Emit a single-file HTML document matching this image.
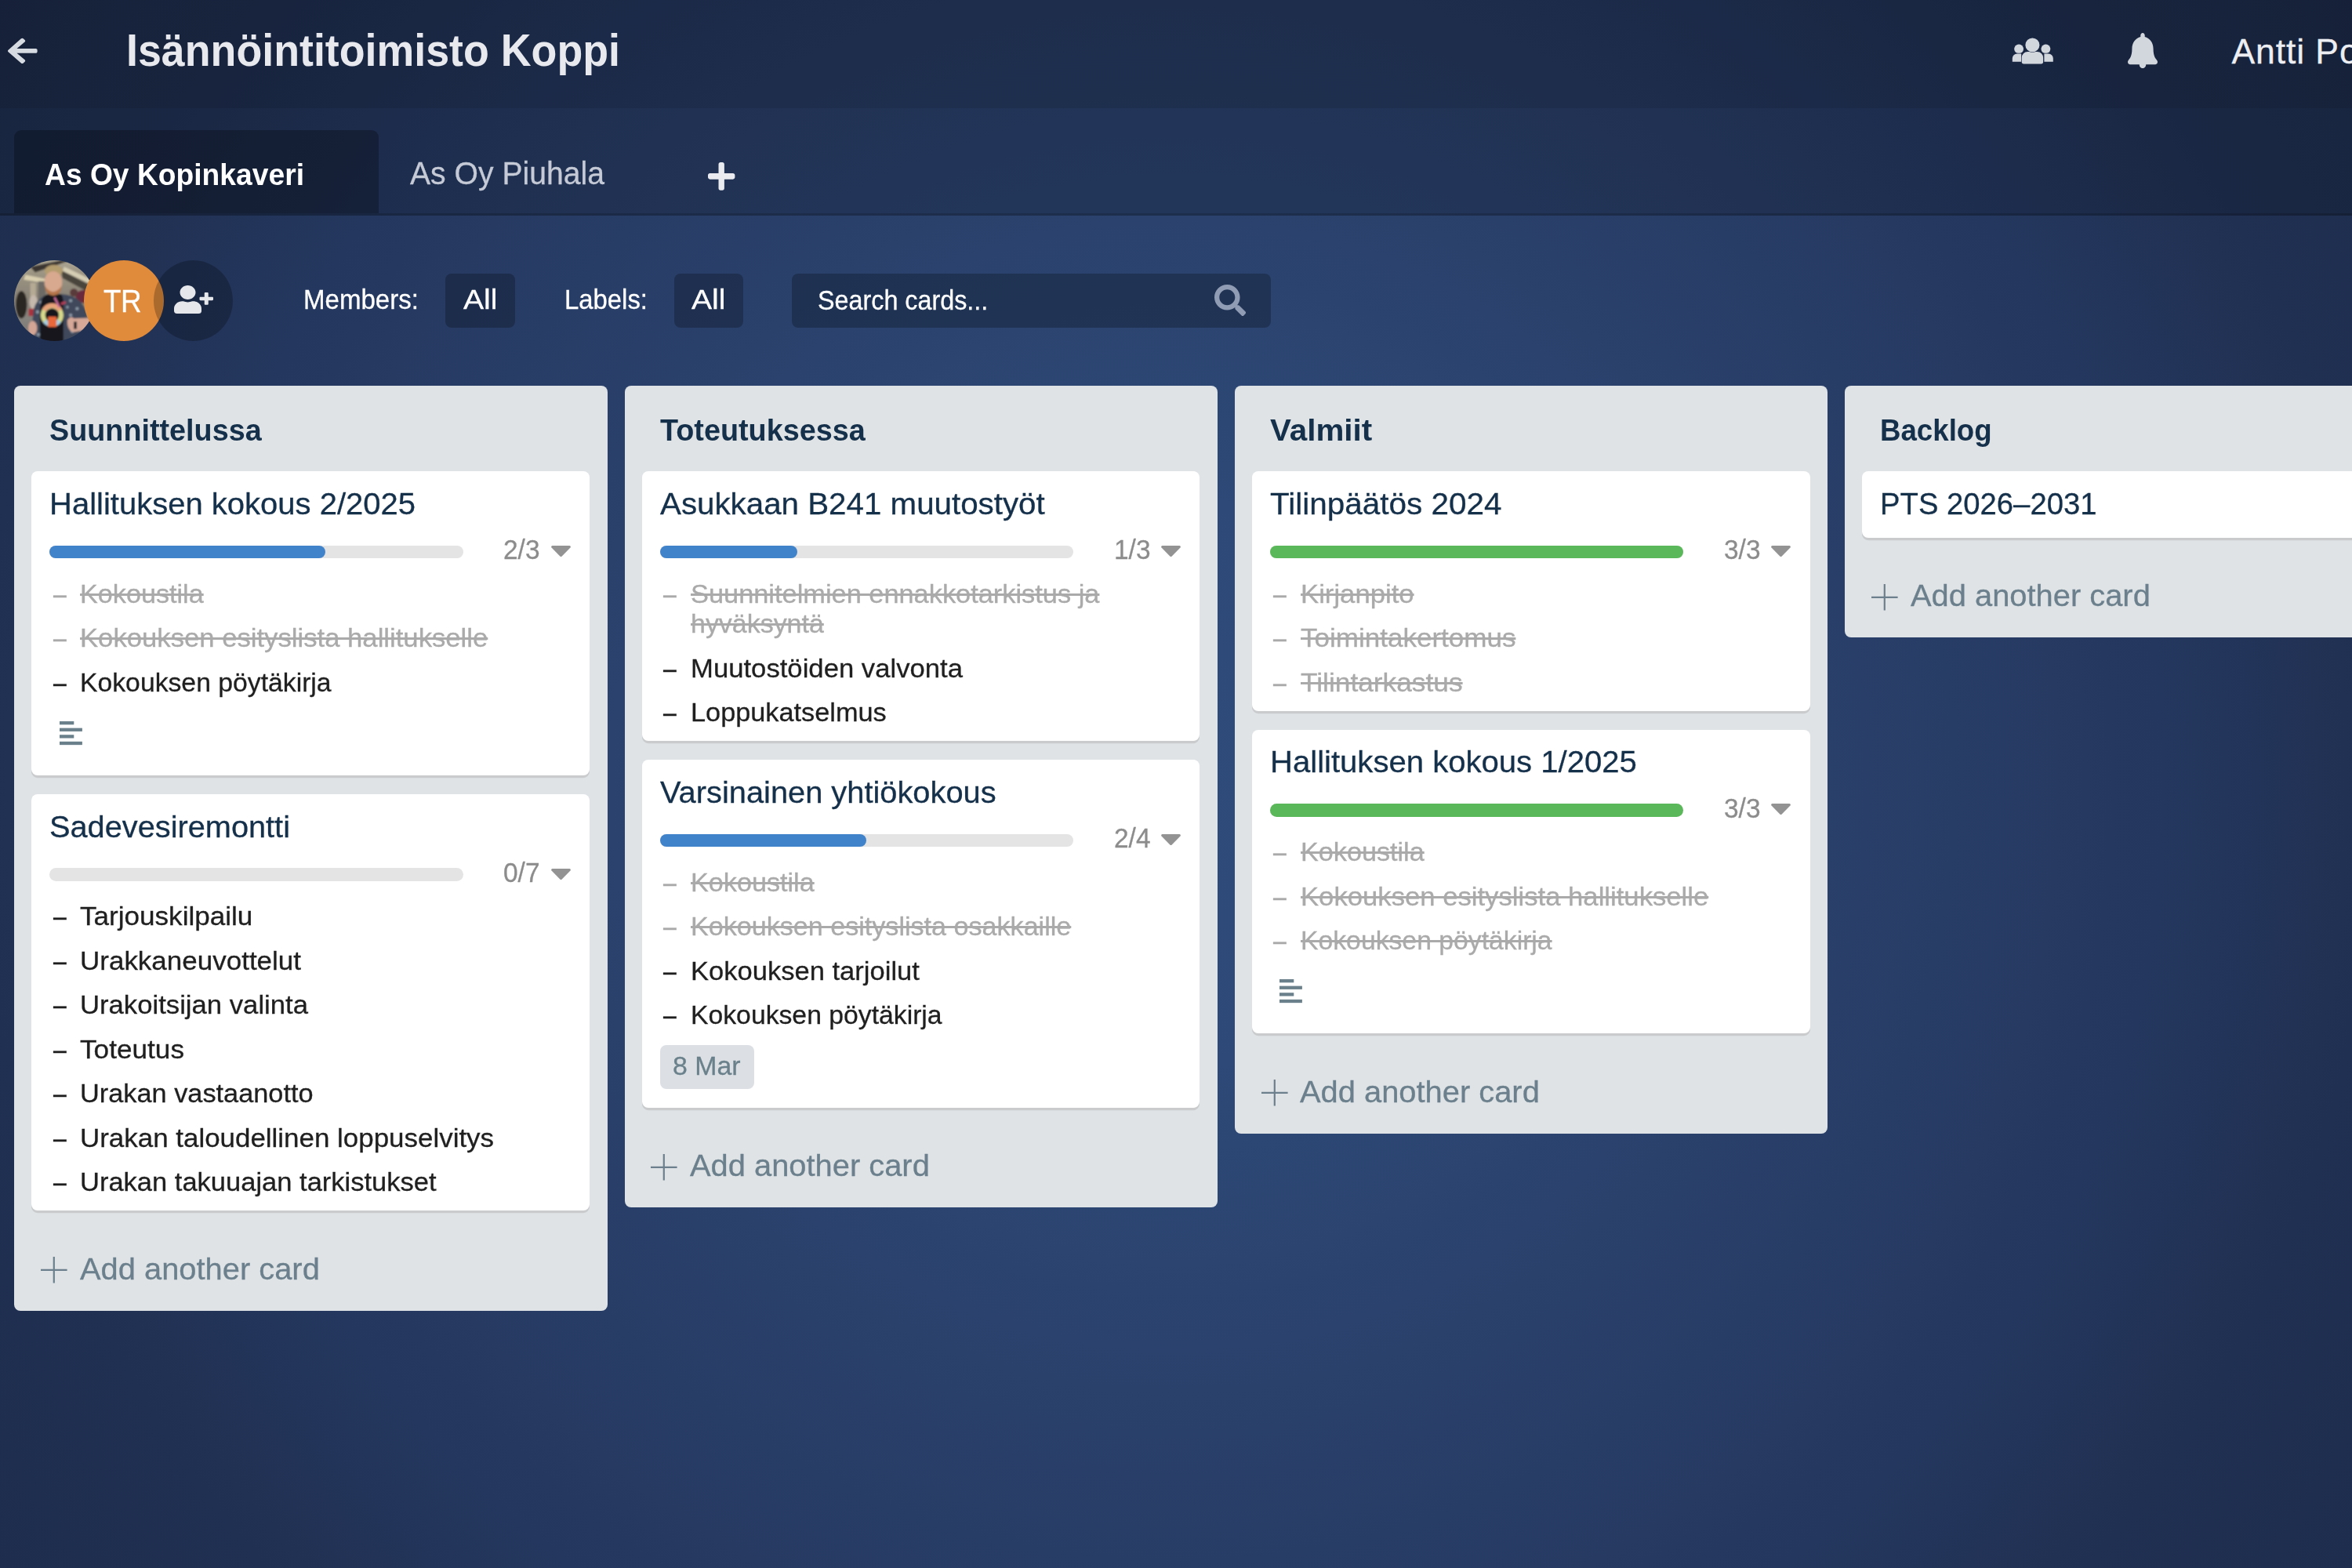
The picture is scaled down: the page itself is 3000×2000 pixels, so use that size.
<!DOCTYPE html>
<html lang="fi"><head><meta charset="utf-8"><title>Isännöintitoimisto Koppi</title>
<style>
*{margin:0;padding:0;box-sizing:border-box}
html,body{width:3000px;height:2000px;overflow:hidden}
body{position:relative;font-family:"Liberation Sans",sans-serif;
 background:radial-gradient(circle farthest-corner at 50% 50%,#2f4b7a 0%,#2e4977 20%,#2a426d 40%,#283d66 55%,#24375e 70%,#203052 85%,#1e2d4d 100%);}
.t{position:absolute;white-space:nowrap;line-height:1;display:block;transform-origin:0 0;-webkit-text-stroke:0.3px currentColor;text-decoration-thickness:2.1px}
.nb{-webkit-text-stroke:0}
.b{position:absolute}
.ic{position:absolute;display:block;overflow:visible}
</style></head>
<body>
<header><div class="b" style="left:0.0px;top:0.0px;width:3000.0px;height:138.0px;background:rgba(0,0,0,.25)"></div><svg class="ic" style="left:9.6px;top:45.7px;width:37.6px;height:37.8px" viewBox="0 0 448 512" preserveAspectRatio="none" ><path fill="#d6dae1" d="M257.5 445.1l-22.2 22.2c-9.4 9.4-24.6 9.4-33.9 0L7 273c-9.4-9.4-9.4-24.6 0-33.9L201.4 44.7c9.4-9.4 24.6-9.4 33.9 0l22.2 22.2c9.5 9.5 9.3 25-.4 34.3L136.6 216H424c13.3 0 24 10.7 24 24v32c0 13.3-10.7 24-24 24H136.6l120.5 114.8c9.8 9.3 10 24.8.4 34.3z"/></svg><h1 class="t nb" style="left:161.0px;top:37.2px;font-size:56.5px;font-weight:700;color:#e7e9ef;transform:scaleX(0.9513);">Isännöintitoimisto Koppi</h1><svg class="ic" style="left:2566px;top:48px;width:54px;height:35px" viewBox="0 0 54 35"><g fill="#d2d6dd" stroke="#1b2845" stroke-width="1.4" paint-order="stroke"><circle cx="9.1" cy="14.3" r="5.9"/><circle cx="43.4" cy="14.3" r="5.9"/><path d="M.8 30.8V26.4a6 6 0 0 1 6-6h5.4v10.4z"/><path d="M52.8 30.8V26.4a6 6 0 0 0-6-6h-5.4v10.4z"/><path d="M15.3 33.4a2.6 2.6 0 0 1-2.6-2.6v-5.3a7.6 7.6 0 0 1 7.6-7.6h12.2a7.6 7.6 0 0 1 7.6 7.6v5.3a2.6 2.6 0 0 1-2.6 2.6z"/><circle cx="26.4" cy="9.4" r="9"/></g></svg><svg class="ic" style="left:2713.6px;top:42.2px;width:38.0px;height:45.0px" viewBox="0 0 448 466" preserveAspectRatio="none" ><path fill="#d2d6dd" d="M224 466c27.6 0 50-22.4 50-50H174c0 27.6 22.4 50 50 50zM439.39 362.29c-19.32-20.76-55.47-51.99-55.47-154.29 0-77.7-54.48-139.9-127.94-155.16V32c0-17.67-14.32-32-31.98-32s-31.98 14.33-31.98 32v20.84C118.56 68.1 64.08 130.3 64.08 208c0 102.3-36.15 133.53-55.47 154.29-6 6.45-8.66 14.16-8.61 21.71.11 16.4 12.98 32 32.1 32h383.8c19.12 0 32-15.6 32.1-32 .05-7.55-2.61-15.27-8.61-21.71z"/></svg><span class="t " style="left:2846.5px;top:43.7px;font-size:44.5px;font-weight:400;color:#eceef2;letter-spacing:0.9px;">Antti Po</span></header>
<nav><div class="b" style="left:0.0px;top:138.0px;width:3000.0px;height:134.0px;background:rgba(0,0,0,.17)"></div><div class="b" style="left:0.0px;top:272.0px;width:3000.0px;height:2.6px;background:rgba(0,0,0,.30)"></div><div class="b" style="left:18.3px;top:165.6px;width:465.2px;height:106.6px;background:rgba(0,0,0,.26);border-radius:9px 9px 0 0"></div><span class="t nb" style="left:57.0px;top:202.5px;font-size:39px;font-weight:700;color:#fff;transform:scaleX(0.9544);">As Oy Kopinkaveri</span><span class="t " style="left:522.9px;top:201.4px;font-size:40.5px;font-weight:400;color:#c5cad6;transform:scaleX(0.9663);">As Oy Piuhala</span><svg class="ic" style="left:903.0px;top:207.1px;width:34.4px;height:35.7px" viewBox="0 32 448 448" preserveAspectRatio="none" ><path fill="#e9ebf0" d="M416 208H272V64c0-17.67-14.33-32-32-32h-32c-17.67 0-32 14.33-32 32v144H32c-17.67 0-32 14.33-32 32v32c0 17.67 14.33 32 32 32h144v144c0 17.67 14.33 32 32 32h32c17.67 0 32-14.33 32-32V304h144c17.67 0 32-14.33 32-32v-32c0-17.67-14.33-32-32-32z"/></svg></nav>
<section class="toolbar"><svg class="ic" style="left:18px;top:331.5px;width:103px;height:103px" viewBox="0 0 100 100"><defs><clipPath id="avc"><circle cx="50" cy="50" r="50"/></clipPath><filter id="avb" x="-10%" y="-10%" width="120%" height="120%"><feGaussianBlur stdDeviation="1.1"/></filter><linearGradient id="avbg" x1="0" y1="0" x2="0" y2="1"><stop offset="0" stop-color="#b3ac9a"/><stop offset=".2" stop-color="#9c9482"/><stop offset=".45" stop-color="#8a8478"/><stop offset=".7" stop-color="#86827d"/><stop offset="1" stop-color="#76726c"/></linearGradient></defs><g clip-path="url(#avc)"><g filter="url(#avb)"><rect x="-5" y="-5" width="110" height="110" fill="url(#avbg)"/><path d="M20 8 58 0 70 0 26 15z" fill="#3b3630"/><path d="M14 18 44 24 44 29 12 24z" fill="#d9cfb0"/><path d="M58 12 100 34V44L60 22z" fill="#4a443c"/><path d="M62 8 100 26v6L60 13z" fill="#d6ceb4"/><rect x="30" y="26" width="9" height="30" fill="#6d6a66"/><rect x="20" y="28" width="7" height="24" fill="#b5aa94"/><ellipse cx="9" cy="55" rx="7" ry="17" fill="#2b2521"/><ellipse cx="24" cy="52" rx="5" ry="9" fill="#c5b8ac"/><rect x="18" y="60" width="9" height="9" fill="#a8323c"/><ellipse cx="86" cy="45" rx="10" ry="8" fill="#6b2a3e"/><ellipse cx="74" cy="40" rx="5" ry="5" fill="#5a3a3a"/><path d="M20 104 24 62Q28 44 46 42H60Q84 44 90 66L96 104z" fill="#3f4a5c"/><g fill="#8e9aa8"><circle cx="33" cy="52" r="2"/><circle cx="29" cy="64" r="2"/><circle cx="36" cy="74" r="1.8"/><circle cx="70" cy="50" r="2"/><circle cx="78" cy="60" r="2"/><circle cx="70" cy="68" r="2"/><circle cx="82" cy="74" r="2"/><circle cx="72" cy="88" r="2"/><circle cx="66" cy="58" r="1.6"/><circle cx="30" cy="92" r="2"/><circle cx="84" cy="90" r="1.8"/></g><path d="M32 104V60Q33 44 42 42H58Q62 46 61 60V104z" fill="#17181c"/><ellipse cx="49" cy="13" rx="11" ry="7.5" fill="#b39c6e"/><ellipse cx="48.5" cy="27" rx="11" ry="13.5" fill="#d8a98f"/><path d="M38 32Q48 46 59 32Q58 43 48.500 44Q39 43 38 32z" fill="#b5744a"/><circle cx="47" cy="68" r="11.3" fill="none" stroke="#d6d98c" stroke-width="5.6"/><path d="M37 62A11.300 11.300 0 0 1 57 62" fill="none" stroke="#e8a27a" stroke-width="5.6"/><path d="M38 75A11.300 11.300 0 0 0 56 75" fill="none" stroke="#a6cde0" stroke-width="5.6"/><path d="M50 46 56 58" stroke="#c86a9a" stroke-width="2.5"/><path d="M58 54 64 52" stroke="#b8405a" stroke-width="3"/><rect x="42" y="70" width="10.5" height="12.5" rx="1" fill="#e9683a"/><ellipse cx="23" cy="84" rx="5.5" ry="9" fill="#d3a595"/><path d="M66 74Q70 68 74 72L96 71V85L73 89Q65 86 66 74z" fill="#d6a898"/><rect x="74" y="76" width="3.6" height="9" fill="#1c1c20"/></g></g></svg><div class="b" style="left:107.0px;top:331.5px;width:102.0px;height:103.0px;background:#e08a3c;border-radius:50%"></div><span class="t " style="left:132.0px;top:364.3px;font-size:41px;font-weight:400;color:#fff;transform:scaleX(.9);letter-spacing:-0.6px;">TR</span><div class="b" style="left:196.0px;top:331.5px;width:101.0px;height:103.0px;background:rgba(0,0,0,.24);border-radius:50%"></div><svg class="ic" style="left:222.0px;top:364.0px;width:50.0px;height:36.0px" viewBox="0 0 640 512" preserveAspectRatio="none" ><path fill="#e5e7eb" d="M624 208h-64v-64c0-8.8-7.2-16-16-16h-32c-8.8 0-16 7.2-16 16v64h-64c-8.8 0-16 7.2-16 16v32c0 8.8 7.2 16 16 16h64v64c0 8.8 7.2 16 16 16h32c8.8 0 16-7.2 16-16v-64h64c8.8 0 16-7.2 16-16v-32c0-8.8-7.2-16-16-16zm-400 48c70.7 0 128-57.3 128-128S294.7 0 224 0 96 57.3 96 128s57.3 128 128 128zm89.6 32h-16.7c-22.2 10.2-46.9 16-72.9 16s-50.6-5.8-72.9-16h-16.7C60.2 288 0 348.2 0 422.4V464c0 26.5 21.5 48 48 48h352c26.5 0 48-21.5 48-48v-41.6c0-74.2-60.2-134.4-134.4-134.4z"/></svg><span class="t " style="left:386.8px;top:364.7px;font-size:34.6px;font-weight:400;color:#fff;transform:scaleX(0.9563);">Members:</span><div class="b" style="left:568.4px;top:349.1px;width:88.4px;height:68.9px;background:rgba(0,0,0,.24);border-radius:8px"></div><span class="t " style="left:590.5px;top:364.7px;font-size:34.6px;font-weight:400;color:#fff;transform:scaleX(1.1317);">All</span><span class="t " style="left:719.5px;top:364.7px;font-size:34.6px;font-weight:400;color:#fff;transform:scaleX(0.9505);">Labels:</span><div class="b" style="left:860.0px;top:349.1px;width:88.4px;height:68.9px;background:rgba(0,0,0,.24);border-radius:8px"></div><span class="t " style="left:882.0px;top:364.7px;font-size:34.6px;font-weight:400;color:#fff;transform:scaleX(1.1317);">All</span><div class="b" style="left:1009.8px;top:349.1px;width:611.0px;height:68.9px;background:rgba(0,0,0,.24);border-radius:8px"></div><span class="t " style="left:1042.5px;top:365.7px;font-size:34.6px;font-weight:400;color:#fff;transform:scaleX(0.9344);">Search cards...</span><svg class="ic" style="left:1548.5px;top:363.0px;width:40.1px;height:40.0px" viewBox="0 0 512 512" preserveAspectRatio="none" ><path fill="#8f9cb4" d="M505 442.7L405.3 343c-4.5-4.5-10.6-7-17-7H372c27.6-35.3 44-79.7 44-128C416 93.1 322.9 0 208 0S0 93.1 0 208s93.1 208 208 208c48.3 0 92.7-16.4 128-44v16.3c0 6.4 2.5 12.5 7 17l99.7 99.7c9.4 9.4 24.6 9.4 33.9 0l28.3-28.3c9.4-9.4 9.4-24.6.1-34zM208 336c-70.7 0-128-57.2-128-128 0-70.7 57.2-128 128-128 70.7 0 128 57.2 128 128 0 70.7-57.2 128-128 128z"/></svg></section>
<section class="list"><div class="b" style="left:18.3px;top:491.8px;width:756.5px;height:1179.9px;background:#dfe3e6;border-radius:8px"></div><h2 class="t nb" style="left:63.3px;top:529.6px;font-size:38.6px;font-weight:700;color:#15304a;transform:scaleX(0.9790);">Suunnittelussa</h2><article><div class="b card" style="left:40.4px;top:601.4px;width:711.8px;height:387.9px;background:#fff;border-radius:8px;box-shadow:0 3.2px 0 #c9cbcd"></div><h3 class="t " style="left:63.4px;top:623.0px;font-size:39.4px;font-weight:400;color:#15304a;transform:scaleX(1.0156);">Hallituksen kokous 2/2025</h3><div class="b" style="left:63.4px;top:695.8px;width:527.6px;height:16.6px;background:#e4e4e4;border-radius:9px"></div><div class="b" style="left:63.4px;top:695.8px;width:351.7px;height:16.6px;background:#4183cb;border-radius:9px"></div><span class="t " style="left:642.3px;top:684.4px;font-size:35.4px;font-weight:400;color:#8c8c8c;transform:scaleX(0.9451);">2/3</span><svg class="ic" style="left:702.6px;top:696.0px;width:25px;height:14px" viewBox="0 0 25 14"><path fill="#939393" d="M1.6 0h21.8c1.3 0 2 1.5 1.1 2.5L13.7 13.4c-.7.7-1.7.7-2.4 0L.5 2.5C-.4 1.5.3 0 1.6 0z"/></svg><span class="t " style="left:67.7px;top:740.8px;font-size:33.3px;font-weight:400;color:#aaaaaa;transform:scaleX(0.9066);">–</span><span class="t " style="left:102.4px;top:740.8px;font-size:33.3px;font-weight:400;color:#aaaaaa;transform:scaleX(1.0265);text-decoration:line-through;">Kokoustila</span><span class="t " style="left:67.7px;top:797.3px;font-size:33.3px;font-weight:400;color:#aaaaaa;transform:scaleX(0.9066);">–</span><span class="t " style="left:102.4px;top:797.3px;font-size:33.3px;font-weight:400;color:#aaaaaa;transform:scaleX(1.0412);text-decoration:line-through;">Kokouksen esityslista hallitukselle</span><span class="t " style="left:67.7px;top:853.8px;font-size:33.3px;font-weight:400;color:#1f1f1f;transform:scaleX(0.9066);">–</span><span class="t " style="left:102.4px;top:853.8px;font-size:33.3px;font-weight:400;color:#1f1f1f;transform:scaleX(1.0130);">Kokouksen pöytäkirja</span><svg class="ic" style="left:75.6px;top:920.2px;width:29px;height:30.2px" viewBox="0 0 29 30.2"><rect x="0" y="0.00" width="18.3" height="4.3" fill="#6a808b"/><rect x="0" y="8.62" width="28.9" height="4.3" fill="#6a808b"/><rect x="0" y="17.24" width="18.3" height="4.3" fill="#6a808b"/><rect x="0" y="25.86" width="28.9" height="4.3" fill="#6a808b"/></svg></article><article><div class="b card" style="left:40.4px;top:1012.9px;width:711.8px;height:531.6px;background:#fff;border-radius:8px;box-shadow:0 3.2px 0 #c9cbcd"></div><h3 class="t " style="left:63.4px;top:1034.5px;font-size:39.4px;font-weight:400;color:#15304a;transform:scaleX(1.0087);">Sadevesiremontti</h3><div class="b" style="left:63.4px;top:1107.3px;width:527.6px;height:16.6px;background:#e4e4e4;border-radius:9px"></div><span class="t " style="left:642.3px;top:1095.9px;font-size:35.4px;font-weight:400;color:#8c8c8c;transform:scaleX(0.9451);">0/7</span><svg class="ic" style="left:702.6px;top:1107.5px;width:25px;height:14px" viewBox="0 0 25 14"><path fill="#939393" d="M1.6 0h21.8c1.3 0 2 1.5 1.1 2.5L13.7 13.4c-.7.7-1.7.7-2.4 0L.5 2.5C-.4 1.5.3 0 1.6 0z"/></svg><span class="t " style="left:67.7px;top:1152.3px;font-size:33.3px;font-weight:400;color:#1f1f1f;transform:scaleX(0.9066);">–</span><span class="t " style="left:102.4px;top:1152.3px;font-size:33.3px;font-weight:400;color:#1f1f1f;transform:scaleX(1.0538);">Tarjouskilpailu</span><span class="t " style="left:67.7px;top:1208.8px;font-size:33.3px;font-weight:400;color:#1f1f1f;transform:scaleX(0.9066);">–</span><span class="t " style="left:102.4px;top:1208.8px;font-size:33.3px;font-weight:400;color:#1f1f1f;transform:scaleX(1.0508);">Urakkaneuvottelut</span><span class="t " style="left:67.7px;top:1265.3px;font-size:33.3px;font-weight:400;color:#1f1f1f;transform:scaleX(0.9066);">–</span><span class="t " style="left:102.4px;top:1265.3px;font-size:33.3px;font-weight:400;color:#1f1f1f;transform:scaleX(1.0413);">Urakoitsijan valinta</span><span class="t " style="left:67.7px;top:1321.8px;font-size:33.3px;font-weight:400;color:#1f1f1f;transform:scaleX(0.9066);">–</span><span class="t " style="left:102.4px;top:1321.8px;font-size:33.3px;font-weight:400;color:#1f1f1f;transform:scaleX(1.0566);">Toteutus</span><span class="t " style="left:67.7px;top:1378.3px;font-size:33.3px;font-weight:400;color:#1f1f1f;transform:scaleX(0.9066);">–</span><span class="t " style="left:102.4px;top:1378.3px;font-size:33.3px;font-weight:400;color:#1f1f1f;transform:scaleX(1.0306);">Urakan vastaanotto</span><span class="t " style="left:67.7px;top:1434.8px;font-size:33.3px;font-weight:400;color:#1f1f1f;transform:scaleX(0.9066);">–</span><span class="t " style="left:102.4px;top:1434.8px;font-size:33.3px;font-weight:400;color:#1f1f1f;transform:scaleX(1.0488);">Urakan taloudellinen loppuselvitys</span><span class="t " style="left:67.7px;top:1491.3px;font-size:33.3px;font-weight:400;color:#1f1f1f;transform:scaleX(0.9066);">–</span><span class="t " style="left:102.4px;top:1491.3px;font-size:33.3px;font-weight:400;color:#1f1f1f;transform:scaleX(1.0364);">Urakan takuuajan tarkistukset</span></article><svg class="ic" style="left:52.1px;top:1603.0px;width:33.6px;height:33.6px" viewBox="0 0 33.6 33.6"><path d="M16.8 0v33.6M0 16.8h33.6" stroke="#6b808c" stroke-width="2.2" fill="none"/></svg><span class="t " style="left:102.0px;top:1598.6px;font-size:39.4px;font-weight:400;color:#6b808c;transform:scaleX(1.0119);">Add another card</span></section>
<section class="list"><div class="b" style="left:796.5px;top:491.8px;width:756.5px;height:1048.4px;background:#dfe3e6;border-radius:8px"></div><h2 class="t nb" style="left:841.5px;top:529.6px;font-size:38.6px;font-weight:700;color:#15304a;transform:scaleX(0.9791);">Toteutuksessa</h2><article><div class="b card" style="left:818.6px;top:601.4px;width:711.8px;height:344.1px;background:#fff;border-radius:8px;box-shadow:0 3.2px 0 #c9cbcd"></div><h3 class="t " style="left:841.6px;top:623.0px;font-size:39.4px;font-weight:400;color:#15304a;transform:scaleX(1.0233);">Asukkaan B241 muutostyöt</h3><div class="b" style="left:841.6px;top:695.8px;width:527.6px;height:16.6px;background:#e4e4e4;border-radius:9px"></div><div class="b" style="left:841.6px;top:695.8px;width:175.9px;height:16.6px;background:#4183cb;border-radius:9px"></div><span class="t " style="left:1420.5px;top:684.4px;font-size:35.4px;font-weight:400;color:#8c8c8c;transform:scaleX(0.9451);">1/3</span><svg class="ic" style="left:1480.8px;top:696.0px;width:25px;height:14px" viewBox="0 0 25 14"><path fill="#939393" d="M1.6 0h21.8c1.3 0 2 1.5 1.1 2.5L13.7 13.4c-.7.7-1.7.7-2.4 0L.5 2.5C-.4 1.5.3 0 1.6 0z"/></svg><span class="t " style="left:845.9px;top:740.8px;font-size:33.3px;font-weight:400;color:#aaaaaa;transform:scaleX(0.9066);">–</span><span class="t " style="left:880.6px;top:740.8px;font-size:33.3px;font-weight:400;color:#aaaaaa;transform:scaleX(1.0319);text-decoration:line-through;">Suunnitelmien ennakkotarkistus ja</span><span class="t " style="left:880.6px;top:779.3px;font-size:33.3px;font-weight:400;color:#aaaaaa;transform:scaleX(1.0193);text-decoration:line-through;">hyväksyntä</span><span class="t " style="left:845.9px;top:835.8px;font-size:33.3px;font-weight:400;color:#1f1f1f;transform:scaleX(0.9066);">–</span><span class="t " style="left:880.6px;top:835.8px;font-size:33.3px;font-weight:400;color:#1f1f1f;transform:scaleX(1.0415);">Muutostöiden valvonta</span><span class="t " style="left:845.9px;top:892.3px;font-size:33.3px;font-weight:400;color:#1f1f1f;transform:scaleX(0.9066);">–</span><span class="t " style="left:880.6px;top:892.3px;font-size:33.3px;font-weight:400;color:#1f1f1f;transform:scaleX(1.0298);">Loppukatselmus</span></article><article><div class="b card" style="left:818.6px;top:969.1px;width:711.8px;height:443.9px;background:#fff;border-radius:8px;box-shadow:0 3.2px 0 #c9cbcd"></div><h3 class="t " style="left:841.6px;top:990.7px;font-size:39.4px;font-weight:400;color:#15304a;transform:scaleX(1.0107);">Varsinainen yhtiökokous</h3><div class="b" style="left:841.6px;top:1063.5px;width:527.6px;height:16.6px;background:#e4e4e4;border-radius:9px"></div><div class="b" style="left:841.6px;top:1063.5px;width:263.8px;height:16.6px;background:#4183cb;border-radius:9px"></div><span class="t " style="left:1420.5px;top:1052.1px;font-size:35.4px;font-weight:400;color:#8c8c8c;transform:scaleX(0.9451);">2/4</span><svg class="ic" style="left:1480.8px;top:1063.7px;width:25px;height:14px" viewBox="0 0 25 14"><path fill="#939393" d="M1.6 0h21.8c1.3 0 2 1.5 1.1 2.5L13.7 13.4c-.7.7-1.7.7-2.4 0L.5 2.5C-.4 1.5.3 0 1.6 0z"/></svg><span class="t " style="left:845.9px;top:1108.5px;font-size:33.3px;font-weight:400;color:#aaaaaa;transform:scaleX(0.9066);">–</span><span class="t " style="left:880.6px;top:1108.5px;font-size:33.3px;font-weight:400;color:#aaaaaa;transform:scaleX(1.0265);text-decoration:line-through;">Kokoustila</span><span class="t " style="left:845.9px;top:1165.0px;font-size:33.3px;font-weight:400;color:#aaaaaa;transform:scaleX(0.9066);">–</span><span class="t " style="left:880.6px;top:1165.0px;font-size:33.3px;font-weight:400;color:#aaaaaa;transform:scaleX(1.0243);text-decoration:line-through;">Kokouksen esityslista osakkaille</span><span class="t " style="left:845.9px;top:1221.5px;font-size:33.3px;font-weight:400;color:#1f1f1f;transform:scaleX(0.9066);">–</span><span class="t " style="left:880.6px;top:1221.5px;font-size:33.3px;font-weight:400;color:#1f1f1f;transform:scaleX(1.0375);">Kokouksen tarjoilut</span><span class="t " style="left:845.9px;top:1278.0px;font-size:33.3px;font-weight:400;color:#1f1f1f;transform:scaleX(0.9066);">–</span><span class="t " style="left:880.6px;top:1278.0px;font-size:33.3px;font-weight:400;color:#1f1f1f;transform:scaleX(1.0130);">Kokouksen pöytäkirja</span><div class="b" style="left:841.6px;top:1332.7px;width:120.4px;height:56.6px;background:#dce0e4;border-radius:8px"></div><span class="t " style="left:858.0px;top:1342.9px;font-size:33.3px;font-weight:400;color:#6a808b;transform:scaleX(1.0162);">8 Mar</span></article><svg class="ic" style="left:830.3px;top:1471.5px;width:33.6px;height:33.6px" viewBox="0 0 33.6 33.6"><path d="M16.8 0v33.6M0 16.8h33.6" stroke="#6b808c" stroke-width="2.2" fill="none"/></svg><span class="t " style="left:880.2px;top:1467.1px;font-size:39.4px;font-weight:400;color:#6b808c;transform:scaleX(1.0119);">Add another card</span></section>
<section class="list"><div class="b" style="left:1574.7px;top:491.8px;width:756.5px;height:953.9px;background:#dfe3e6;border-radius:8px"></div><h2 class="t nb" style="left:1619.7px;top:529.6px;font-size:38.6px;font-weight:700;color:#15304a;transform:scaleX(1.0468);">Valmiit</h2><article><div class="b card" style="left:1596.8px;top:601.4px;width:711.8px;height:305.6px;background:#fff;border-radius:8px;box-shadow:0 3.2px 0 #c9cbcd"></div><h3 class="t " style="left:1619.8px;top:623.0px;font-size:39.4px;font-weight:400;color:#15304a;transform:scaleX(1.0274);">Tilinpäätös 2024</h3><div class="b" style="left:1619.8px;top:695.8px;width:527.6px;height:16.6px;background:#e4e4e4;border-radius:9px"></div><div class="b" style="left:1619.8px;top:695.8px;width:527.6px;height:16.6px;background:#5bb85a;border-radius:9px"></div><span class="t " style="left:2198.7px;top:684.4px;font-size:35.4px;font-weight:400;color:#8c8c8c;transform:scaleX(0.9451);">3/3</span><svg class="ic" style="left:2259.0px;top:696.0px;width:25px;height:14px" viewBox="0 0 25 14"><path fill="#939393" d="M1.6 0h21.8c1.3 0 2 1.5 1.1 2.5L13.7 13.4c-.7.7-1.7.7-2.4 0L.5 2.5C-.4 1.5.3 0 1.6 0z"/></svg><span class="t " style="left:1624.1px;top:740.8px;font-size:33.3px;font-weight:400;color:#aaaaaa;transform:scaleX(0.9066);">–</span><span class="t " style="left:1658.8px;top:740.8px;font-size:33.3px;font-weight:400;color:#aaaaaa;transform:scaleX(1.0416);text-decoration:line-through;">Kirjanpito</span><span class="t " style="left:1624.1px;top:797.3px;font-size:33.3px;font-weight:400;color:#aaaaaa;transform:scaleX(0.9066);">–</span><span class="t " style="left:1658.8px;top:797.3px;font-size:33.3px;font-weight:400;color:#aaaaaa;transform:scaleX(1.0517);text-decoration:line-through;">Toimintakertomus</span><span class="t " style="left:1624.1px;top:853.8px;font-size:33.3px;font-weight:400;color:#aaaaaa;transform:scaleX(0.9066);">–</span><span class="t " style="left:1658.8px;top:853.8px;font-size:33.3px;font-weight:400;color:#aaaaaa;transform:scaleX(1.0600);text-decoration:line-through;">Tilintarkastus</span></article><article><div class="b card" style="left:1596.8px;top:930.6px;width:711.8px;height:387.9px;background:#fff;border-radius:8px;box-shadow:0 3.2px 0 #c9cbcd"></div><h3 class="t " style="left:1619.8px;top:952.2px;font-size:39.4px;font-weight:400;color:#15304a;transform:scaleX(1.0173);">Hallituksen kokous 1/2025</h3><div class="b" style="left:1619.8px;top:1025.0px;width:527.6px;height:16.6px;background:#e4e4e4;border-radius:9px"></div><div class="b" style="left:1619.8px;top:1025.0px;width:527.6px;height:16.6px;background:#5bb85a;border-radius:9px"></div><span class="t " style="left:2198.7px;top:1013.6px;font-size:35.4px;font-weight:400;color:#8c8c8c;transform:scaleX(0.9451);">3/3</span><svg class="ic" style="left:2259.0px;top:1025.2px;width:25px;height:14px" viewBox="0 0 25 14"><path fill="#939393" d="M1.6 0h21.8c1.3 0 2 1.5 1.1 2.5L13.7 13.4c-.7.7-1.7.7-2.4 0L.5 2.5C-.4 1.5.3 0 1.6 0z"/></svg><span class="t " style="left:1624.1px;top:1070.0px;font-size:33.3px;font-weight:400;color:#aaaaaa;transform:scaleX(0.9066);">–</span><span class="t " style="left:1658.8px;top:1070.0px;font-size:33.3px;font-weight:400;color:#aaaaaa;transform:scaleX(1.0265);text-decoration:line-through;">Kokoustila</span><span class="t " style="left:1624.1px;top:1126.5px;font-size:33.3px;font-weight:400;color:#aaaaaa;transform:scaleX(0.9066);">–</span><span class="t " style="left:1658.8px;top:1126.5px;font-size:33.3px;font-weight:400;color:#aaaaaa;transform:scaleX(1.0412);text-decoration:line-through;">Kokouksen esityslista hallitukselle</span><span class="t " style="left:1624.1px;top:1183.0px;font-size:33.3px;font-weight:400;color:#aaaaaa;transform:scaleX(0.9066);">–</span><span class="t " style="left:1658.8px;top:1183.0px;font-size:33.3px;font-weight:400;color:#aaaaaa;transform:scaleX(1.0130);text-decoration:line-through;">Kokouksen pöytäkirja</span><svg class="ic" style="left:1632.0px;top:1249.4px;width:29px;height:30.2px" viewBox="0 0 29 30.2"><rect x="0" y="0.00" width="18.3" height="4.3" fill="#6a808b"/><rect x="0" y="8.62" width="28.9" height="4.3" fill="#6a808b"/><rect x="0" y="17.24" width="18.3" height="4.3" fill="#6a808b"/><rect x="0" y="25.86" width="28.9" height="4.3" fill="#6a808b"/></svg></article><svg class="ic" style="left:1608.5px;top:1377.0px;width:33.6px;height:33.6px" viewBox="0 0 33.6 33.6"><path d="M16.8 0v33.6M0 16.8h33.6" stroke="#6b808c" stroke-width="2.2" fill="none"/></svg><span class="t " style="left:1658.4px;top:1372.6px;font-size:39.4px;font-weight:400;color:#6b808c;transform:scaleX(1.0119);">Add another card</span></section>
<section class="list"><div class="b" style="left:2352.9px;top:491.8px;width:756.5px;height:321.6px;background:#dfe3e6;border-radius:8px"></div><h2 class="t nb" style="left:2397.9px;top:529.6px;font-size:38.6px;font-weight:700;color:#15304a;transform:scaleX(0.9502);">Backlog</h2><article><div class="b card" style="left:2375.0px;top:601.4px;width:711.8px;height:84.8px;background:#fff;border-radius:8px;box-shadow:0 3.2px 0 #c9cbcd"></div><h3 class="t " style="left:2398.0px;top:623.0px;font-size:39.4px;font-weight:400;color:#15304a;transform:scaleX(0.9711);">PTS 2026–2031</h3></article><svg class="ic" style="left:2386.7px;top:744.7px;width:33.6px;height:33.6px" viewBox="0 0 33.6 33.6"><path d="M16.8 0v33.6M0 16.8h33.6" stroke="#6b808c" stroke-width="2.2" fill="none"/></svg><span class="t " style="left:2436.6px;top:740.3px;font-size:39.4px;font-weight:400;color:#6b808c;transform:scaleX(1.0119);">Add another card</span></section>
</body></html>
